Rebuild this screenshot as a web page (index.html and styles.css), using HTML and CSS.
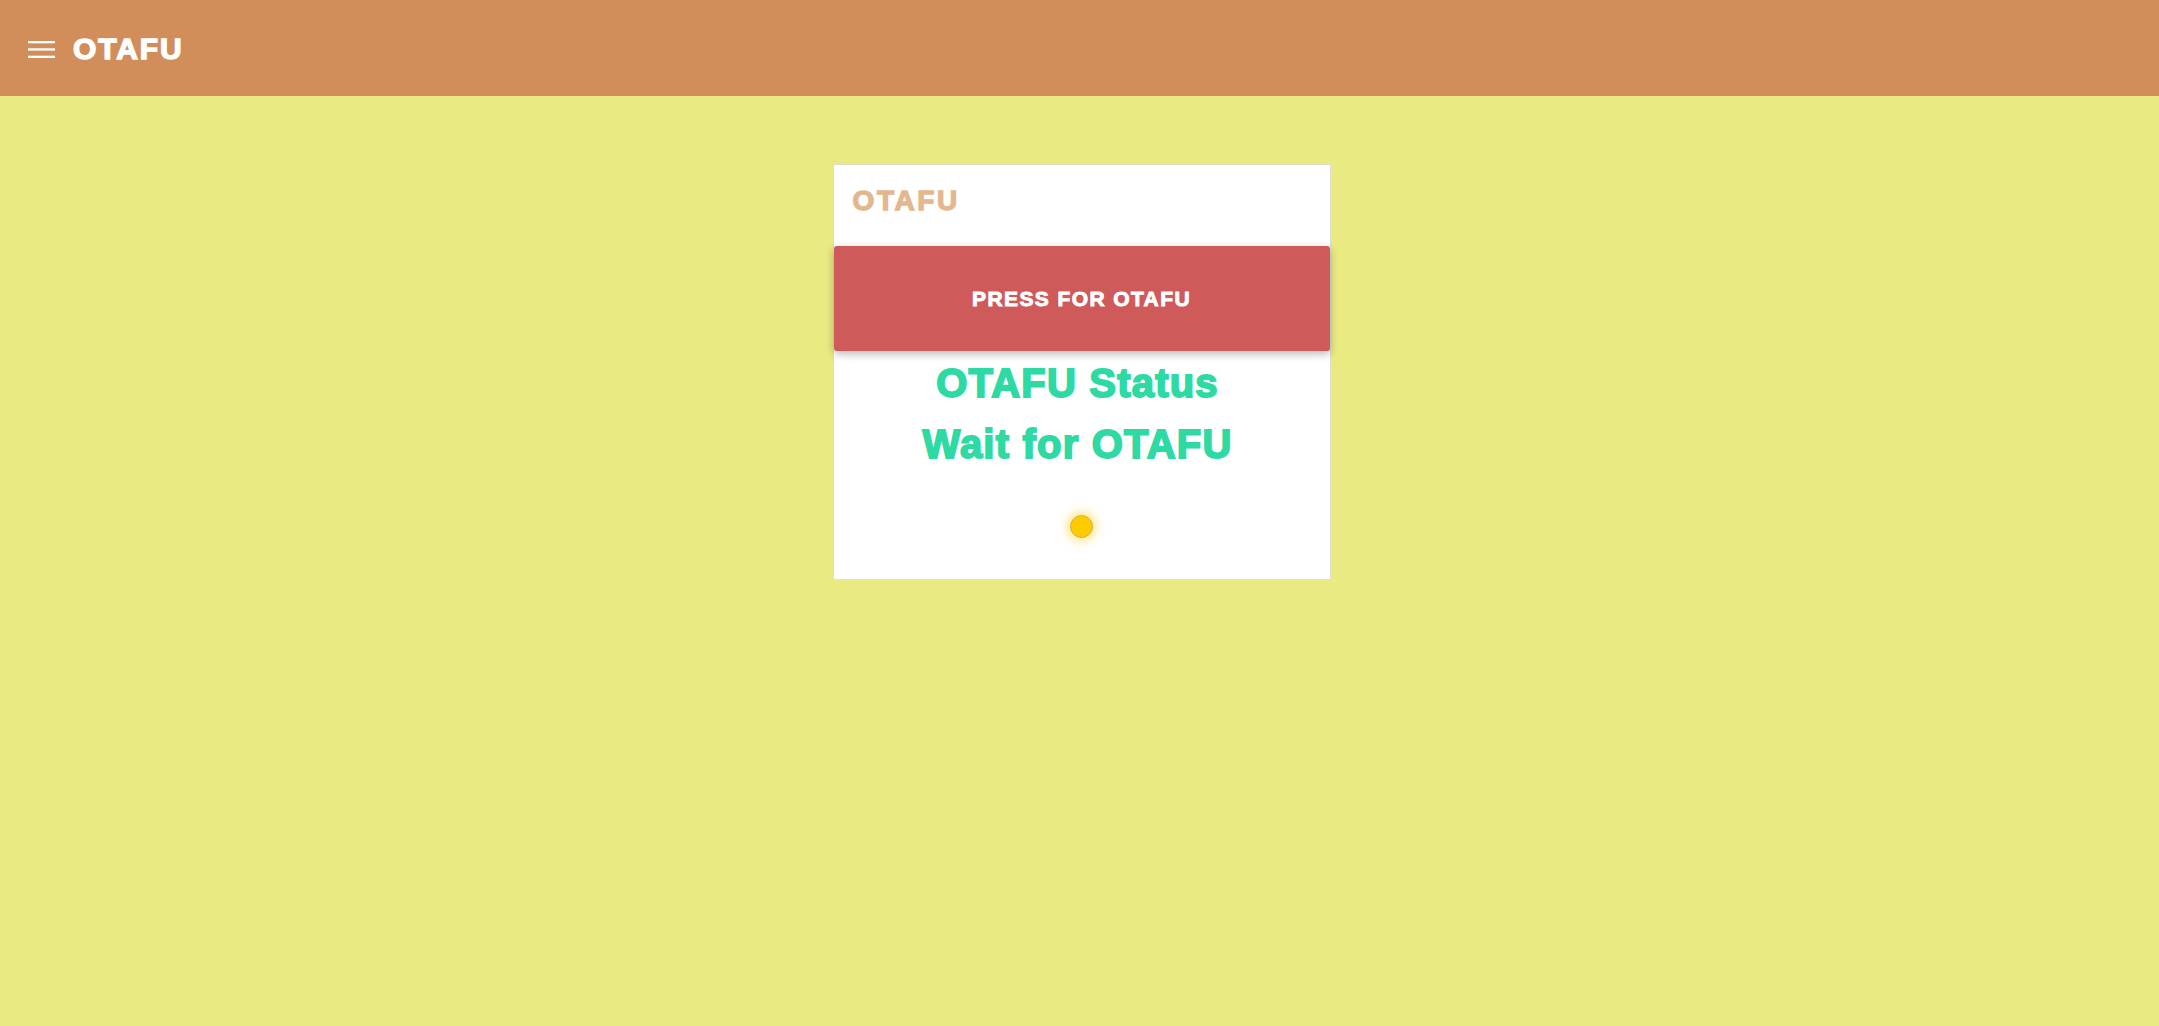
FILE: index.html
```html
<!DOCTYPE html>
<html>
<head>
<meta charset="utf-8">
<link rel="stylesheet" href="styles.css">
</head>
<body>
<header class="topbar">
  <svg class="menu" width="28" height="20" viewBox="0 0 28 20">
    <rect x="0" y="2" width="27" height="2.3" fill="#fff"/>
    <rect x="0" y="9.3" width="27" height="2.3" fill="#fff"/>
    <rect x="0" y="16.7" width="27" height="2.3" fill="#fff"/>
  </svg>
  <span class="brand">OTAFU</span>
</header>
<main class="page">
  <section class="card">
    <div class="card-title">OTAFU</div>
    <button class="press">PRESS FOR OTAFU</button>
    <div class="status">
      <div class="line">OTAFU Status</div>
      <div class="line">Wait for OTAFU</div>
    </div>
    <div class="dot-wrap"><span class="dot"></span></div>
  </section>
</main>
</body>
</html>
```
FILE: styles.css
```css
html, body {
  margin: 0;
  padding: 0;
  background: #e9ea82;
  font-family: "Liberation Sans", Arial, sans-serif;
  font-weight: 700;
}
.topbar {
  height: 96px;
  background: #d18e5a;
  display: flex;
  align-items: center;
  padding-left: 28px;
  box-sizing: border-box;
  gap: 17px;
}
.menu { display: block; margin-top: 2px; }
.brand {
  color: #fff;
  font-size: 30px;
  letter-spacing: 1.9px;
  -webkit-text-stroke: 1.4px #fff;
  line-height: 1;
  margin-top: 1px;
}
.page {
  display: flex;
  justify-content: center;
  padding-top: 69px;
}
.card {
  width: 496px;
  height: 414px;
  background: #fff;
  box-sizing: border-box;
  box-shadow: 0 0 0 1px #dcdcd0;
  display: flex;
  flex-direction: column;
  margin-left: 4px;
}
.card-title {
  height: 81px;
  box-sizing: border-box;
  padding: 20px 0 0 19px;
  color: #e3b78f;
  font-size: 28px;
  line-height: 32px;
  letter-spacing: 2.6px;
  -webkit-text-stroke: 1.3px #e3b78f;
}
.press {
  height: 105px;
  width: 100%;
  border: none;
  border-radius: 3px;
  background: #cf5a5a;
  color: #fff;
  font-family: "Liberation Sans", Arial, sans-serif;
  font-weight: 700;
  font-size: 21px;
  letter-spacing: 1.4px;
  -webkit-text-stroke: 0.9px #fff;
  box-shadow: 0 3px 8px rgba(0,0,0,0.28);
  padding: 0;
}
.status {
  margin-top: 2px;
  text-align: center;
  color: #2ed9a3;
  font-size: 40px;
  line-height: 61px;
  letter-spacing: 1.2px;
  -webkit-text-stroke: 1.8px #2ed9a3;
  padding-right: 8px;
}
.dot-wrap {
  display: flex;
  justify-content: center;
  margin-top: 40px;
}
.dot {
  width: 23px;
  height: 23px;
  border-radius: 50%;
  background: #fecb00;
  box-sizing: border-box;
  border: 1px solid #d4b040;
  box-shadow: 0 0 8px 4px rgba(255, 214, 60, 0.5);
}
```
